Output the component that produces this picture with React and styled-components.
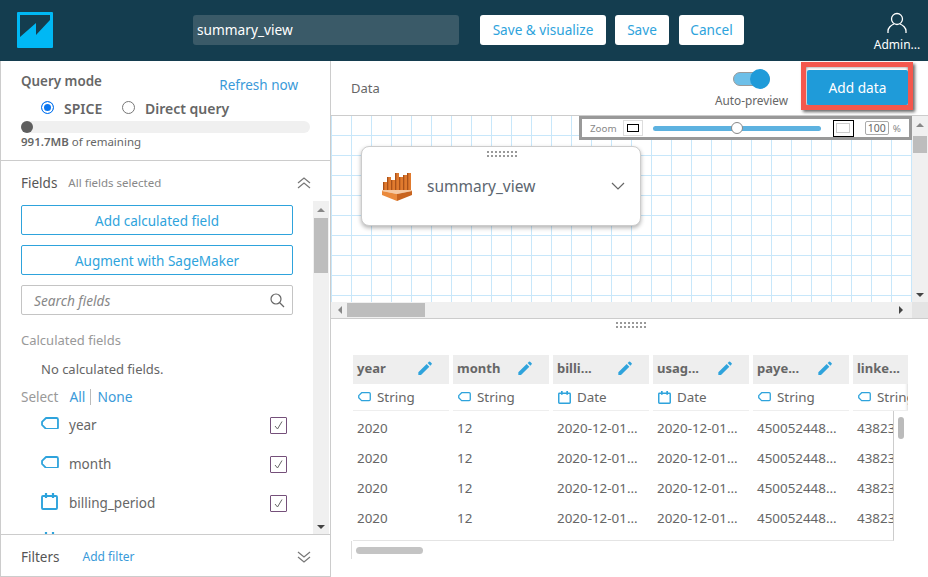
import React from 'react'
import styled, { createGlobalStyle } from 'styled-components'

const columns = [
  { name: 'year', type: 'String', kind: 'tag', value: '2020' },
  { name: 'month', type: 'String', kind: 'tag', value: '12' },
  { name: 'billi...', type: 'Date', kind: 'date', value: '2020-12-01...' },
  { name: 'usag...', type: 'Date', kind: 'date', value: '2020-12-01...' },
  { name: 'paye...', type: 'String', kind: 'tag', value: '450052448...' },
  { name: 'linke...', type: 'String', kind: 'tag', value: '438230000000', noEdit: true },
]

const fields = [
  { name: 'year', kind: 'tag' },
  { name: 'month', kind: 'tag' },
  { name: 'billing_period', kind: 'date' },
]

// x and top of each bar in the orange node icon
const nodeBars = [
  [0, 10],
  [4, 5],
  [8, 8],
  [12, 1],
  [16, 5],
  [20, 3],
  [24, 1],
]

const TagIcon = ({ size = 18 }) => (
  <svg width={size} height={size * 0.72} viewBox="0 0 18 13" fill="none" stroke="#2ea3dc" strokeWidth="1.800">
    <path d="M5 1h10.500a1.500 1.500 0 0 1 1.500 1.500v8a1.500 1.500 0 0 1-1.500 1.500H5L1 8V5z" strokeLinejoin="round" />
  </svg>
)

const DateIcon = ({ size = 17 }) => (
  <svg width={size} height={size} viewBox="0 0 17 17" fill="none" stroke="#2ea3dc" strokeWidth="1.900">
    <rect x="1" y="3" width="15" height="13" rx="1" />
    <path d="M5 0v5M12 0v5" strokeWidth="2.200" />
  </svg>
)

const FieldIcon = ({ kind, size }) =>
  kind === 'date' ? <DateIcon size={size} /> : <TagIcon size={size} />

const Pencil = () => (
  <svg width="16" height="16" viewBox="0 0 24 24" fill="#2ea3dc">
    <path d="M2 18.500V22.500h4L18.500 10l-4-4L2 18.500zM22 6.500a1.200 1.200 0 0 0 0-1.700L19.700 2.500a1.200 1.200 0 0 0-1.700 0L16 4.500l4 4 2-2z" />
  </svg>
)

const DoubleChevron = ({ up }) => (
  <svg width="14" height="12" viewBox="0 0 14 12" fill="none" stroke="#777" strokeWidth="1.200">
    {up ? <path d="M1 6l6-5 6 5M1 11l6-5 6 5" /> : <path d="M1 1l6 5 6-5M1 6l6 5 6-5" />}
  </svg>
)

const Logo = () => (
  <svg width="36" height="36" viewBox="0 0 36 36">
    <rect width="36" height="36" rx="1" fill="#00b8f5" />
    <path d="M3 3h30v5L19 23V11L3 25z" fill="#143d4f" />
  </svg>
)

const NodeIcon = () => (
  <svg width="30" height="29" viewBox="0 0 30 29">
    {nodeBars.map(([x, top]) => (
      <g key={x}>
        <rect x={x + 1} y={top} width="4" height={19 - top} fill="#e07a2e" />
        <rect x={x + 1} y={top} width="1.300" height={19 - top} fill="#a9511a" />
      </g>
    ))}
    <path d="M0 18h30v1l-15 3-15-3z" fill="#f6c9a2" />
    <path d="M0 19l15 3v7L0 23z" fill="#ea8a3c" />
    <path d="M15 22l15-3v4l-15 6z" fill="#c8641f" />
  </svg>
)

const User = () => (
  <svg width="20" height="22" viewBox="0 0 20 22" fill="none" stroke="#fff" strokeWidth="1.300">
    <circle cx="10" cy="7" r="5.500" />
    <path d="M1 21v-2c0-3 3-6 6-7M19 21v-2c0-3-3-6-6-7" />
  </svg>
)

const Search = () => (
  <svg width="15" height="15" viewBox="0 0 15 15" fill="none" stroke="#666" strokeWidth="1.200">
    <circle cx="6" cy="6" r="5" />
    <path d="M9.500 9.500L14 14" />
  </svg>
)

const App = () => (
  <Page>
    <GlobalStyle />
    <Header>
      <LogoSlot><Logo /></LogoSlot>
      <NameInput>summary_view</NameInput>
      <HeaderButton $ml={21} $w={126}>Save &amp; visualize</HeaderButton>
      <HeaderButton $ml={9} $w={54}>Save</HeaderButton>
      <HeaderButton $ml={10} $w={65}>Cancel</HeaderButton>
      <UserBlock>
        <User />
        <span>Admin...</span>
      </UserBlock>
    </Header>
    <Body>
      <Sidebar>
        <QuerySection>
          <QueryTop>
            <SectionLabel>Query mode</SectionLabel>
            <LinkText>Refresh now</LinkText>
          </QueryTop>
          <RadioRow>
            <Radio $on />
            <RadioLabel $w={58}>SPICE</RadioLabel>
            <Radio />
            <RadioLabel>Direct query</RadioLabel>
          </RadioRow>
          <Track><Knob /></Track>
          <Remaining><b>991.7MB</b> of remaining</Remaining>
        </QuerySection>
        <FieldsSection>
          <FieldsHead>
            <Title>Fields</Title>
            <Muted>All fields selected</Muted>
            <ChevronSlot><DoubleChevron up /></ChevronSlot>
          </FieldsHead>
          <FieldsScroll>
            <FieldsContent>
              <OutlineButton>Add calculated field</OutlineButton>
              <OutlineButton>Augment with SageMaker</OutlineButton>
              <SearchBox>
                <em>Search fields</em>
                <Search />
              </SearchBox>
              <GroupLabel>Calculated fields</GroupLabel>
              <EmptyNote>No calculated fields.</EmptyNote>
              <SelectRow>
                <GroupText>Select</GroupText>
                <SelectLink>All</SelectLink>
                <Divider />
                <SelectLink>None</SelectLink>
              </SelectRow>
              {fields.map((f) => (
                <FieldRow key={f.name}>
                  <FieldIconSlot><FieldIcon kind={f.kind} /></FieldIconSlot>
                  <FieldName>{f.name}</FieldName>
                  <Check>
                    <svg width="11" height="11" viewBox="0 0 11 11" fill="none" stroke="#666" strokeWidth="1">
                      <path d="M2 6l2.500 3L9 1.500" />
                    </svg>
                  </Check>
                </FieldRow>
              ))}
              <FieldRow>
                <FieldIconSlot><DateIcon /></FieldIconSlot>
              </FieldRow>
            </FieldsContent>
            <VBar $h={333}>
              <Arrow $dir="up" />
              <Thumb $h={55} $top={1} />
              <BarGap />
              <Arrow $dir="down" />
            </VBar>
          </FieldsScroll>
        </FieldsSection>
        <FiltersSection>
          <Title>Filters</Title>
          <AddFilter>Add filter</AddFilter>
          <ChevronSlot><DoubleChevron /></ChevronSlot>
        </FiltersSection>
      </Sidebar>
      <Main>
        <Toolbar>
          <DataLabel>Data</DataLabel>
          <PreviewBlock>
            <Toggle><ToggleKnob /></Toggle>
            <PreviewLabel>Auto-preview</PreviewLabel>
          </PreviewBlock>
          <Highlight><AddData>Add data</AddData></Highlight>
        </Toolbar>
        <Canvas>
          <CanvasRow>
            <Grid>
              <NodeCard>
                <Grip />
                <NodeIcon />
                <NodeName>summary_view</NodeName>
                <svg width="14" height="8" viewBox="0 0 14 8" fill="none" stroke="#666" strokeWidth="1.200">
                  <path d="M1 1l6 6 6-6" />
                </svg>
              </NodeCard>
            </Grid>
            <VBar $h={186}>
              <Arrow $dir="up" />
              <Thumb $h={17} $top={4} />
              <BarGap />
              <Arrow $dir="down" />
            </VBar>
          </CanvasRow>
          <HBar>
            <Arrow $dir="left" />
            <HThumb />
            <BarGap />
            <Arrow $dir="right" />
            <Corner />
          </HBar>
          <ZoomBar>
            <ZoomLabel>Zoom</ZoomLabel>
            <ZoomBox $small />
            <Slider><SliderKnob /></Slider>
            <ZoomBox />
            <Percent>100</Percent>
            <ZoomLabel>%</ZoomLabel>
          </ZoomBar>
        </Canvas>
        <Divide />
        <TableArea>
          <HeadClip>
            {columns.map((c) => (
              <HeadColumn key={c.name}>
                <HeadCell>
                  <HeadName>{c.name}</HeadName>
                  {!c.noEdit && <Pencil />}
                </HeadCell>
                <TypeCell>
                  <FieldIcon kind={c.kind} size={13} />
                  <span>{c.type}</span>
                </TypeCell>
              </HeadColumn>
            ))}
          </HeadClip>
          <BodyWrap>
            <BodyClip>
              {columns.map((c) => (
                <BodyColumn key={c.name}>
                  {[0, 1, 2, 3].map((i) => (
                    <Cell key={i}>{c.value}</Cell>
                  ))}
                </BodyColumn>
              ))}
            </BodyClip>
            <RowThumb />
          </BodyWrap>
          <FootBar><FootThumb /></FootBar>
        </TableArea>
      </Main>
    </Body>
  </Page>
)

export default App

const GlobalStyle = createGlobalStyle`
  html, body { margin: 0; padding: 0; background: #fff; }
  * { box-sizing: border-box; }
`

const Page = styled.div`
  width: 928px;
  height: 577px;
  overflow: hidden;
  display: flex;
  flex-direction: column;
  font-family: 'Noto Sans', 'Open Sans', sans-serif;
  color: #666;
  font-size: 13px;
`

const Header = styled.header`
  height: 61px;
  flex: none;
  background: #143d4f;
  display: flex;
  align-items: flex-start;
  padding-top: 15px;
`

const LogoSlot = styled.div`
  width: 193px;
  flex: none;
  padding: 0 0 0 17px;
  margin-top: -3px;
`

const NameInput = styled.div`
  width: 266px;
  height: 30px;
  background: #3a5a68;
  border-radius: 3px;
  color: #fff;
  font-size: 13.700px;
  line-height: 30px;
  padding-left: 4px;
`

const HeaderButton = styled.div`
  margin-left: ${(p) => p.$ml}px;
  width: ${(p) => p.$w}px;
  height: 30px;
  background: #fff;
  border-radius: 3px;
  color: #2ea3dc;
  font-size: 13.600px;
  line-height: 30px;
  text-align: center;
`

const UserBlock = styled.div`
  margin-left: auto;
  margin-top: -3px;
  margin-right: 3px;
  width: 56px;
  display: flex;
  flex-direction: column;
  align-items: center;
  color: #fff;
  font-size: 12px;
  line-height: 16px;
  gap: 3px;
`

const Body = styled.div`
  flex: 1;
  display: flex;
  min-height: 0;
`

const Sidebar = styled.aside`
  width: 331px;
  flex: none;
  display: flex;
  flex-direction: column;
  border-left: 1px solid #ccc;
  border-right: 1px solid #ccc;
  border-bottom: 1px solid #ccc;
`

const QuerySection = styled.section`
  height: 100px;
  flex: none;
  padding: 11px 20px 0;
  border-bottom: 1px solid #ccc;
`

const QueryTop = styled.div`
  display: flex;
  justify-content: space-between;
  align-items: flex-start;
  padding-right: 12px;
  height: 26px;
`

const SectionLabel = styled.div`
  font-weight: 600;
  font-size: 13.400px;
  line-height: 18px;
`

const LinkText = styled.div`
  color: #3a9ad9;
  font-size: 13.500px;
  line-height: 18px;
  margin-top: 4px;
`

const RadioRow = styled.div`
  display: flex;
  align-items: center;
  height: 20px;
  padding-left: 20px;
`

const Radio = styled.span`
  width: 13px;
  height: 13px;
  border-radius: 50%;
  flex: none;
  border: 1px solid ${(p) => (p.$on ? '#0a76f0' : '#777')};
  background: ${(p) => (p.$on ? '#0a76f0' : '#fff')};
  box-shadow: ${(p) => (p.$on ? 'inset 0 0 0 2px #fff' : 'none')};
  margin: -2px 10px 0 0;
`

const RadioLabel = styled.span`
  font-weight: 600;
  font-size: 14px;
  ${(p) => (p.$w ? `width: ${p.$w}px;` : '')}
`

const Track = styled.div`
  height: 12px;
  width: 289px;
  margin-top: 3px;
  border-radius: 6px;
  background: #f0f0f0;
`

const Knob = styled.div`
  width: 12px;
  height: 12px;
  border-radius: 50%;
  background: #5f5f5f;
`

const Remaining = styled.div`
  font-size: 11.500px;
  line-height: 16px;
  margin-top: 1px;
  b { font-weight: 600; }
`

const FieldsSection = styled.section`
  flex: 1;
  min-height: 0;
  display: flex;
  flex-direction: column;
  border-bottom: 1px solid #ccc;
`

const FieldsHead = styled.div`
  height: 40px;
  flex: none;
  display: flex;
  align-items: center;
  padding: 3px 19px 0 20px;
`

const Title = styled.span`
  font-size: 13.500px;
  color: #555;
`

const Muted = styled.span`
  font-size: 11.500px;
  color: #888;
  margin-left: 11px;
`

const ChevronSlot = styled.span`
  margin-left: auto;
  display: flex;
`

const FieldsScroll = styled.div`
  flex: 1;
  min-height: 0;
  display: flex;
  overflow: hidden;
`

const FieldsContent = styled.div`
  width: 312px;
  flex: none;
  padding: 4px 20px 0 20px;
  overflow: hidden;
`

const OutlineButton = styled.div`
  height: 30px;
  margin-bottom: 10px;
  border: 1px solid #2ea3dc;
  border-radius: 2px;
  color: #2ea3dc;
  font-size: 13.500px;
  line-height: 30px;
  text-align: center;
`

const SearchBox = styled.div`
  height: 30px;
  border: 1px solid #c4c4c4;
  border-radius: 2px;
  display: flex;
  align-items: center;
  justify-content: space-between;
  padding: 0 7px 0 12px;
  font-size: 13.700px;
  color: #888;
`

const GroupLabel = styled.div`
  margin-top: 15px;
  font-size: 13px;
  line-height: 20px;
  color: #999;
`

const EmptyNote = styled.div`
  margin-top: 9px;
  padding-left: 20px;
  font-size: 13px;
  line-height: 20px;
`

const SelectRow = styled.div`
  margin-top: 10px;
  display: flex;
  align-items: center;
  height: 16px;
  line-height: 20px;
`

const GroupText = styled.span`
  font-size: 13.500px;
  color: #999;
  margin-right: 11px;
`

const SelectLink = styled.span`
  color: #3a9ad9;
  font-size: 13.800px;
`

const Divider = styled.span`
  width: 1px;
  height: 16px;
  background: #bbb;
  margin: 0 6px 0 5px;
`

const FieldRow = styled.div`
  height: 39px;
  display: flex;
  align-items: center;
  padding: 0 6px 0 20px;
`

const FieldIconSlot = styled.span`
  width: 28px;
  flex: none;
  display: flex;
  margin-top: -3px;
`

const FieldName = styled.span`
  font-size: 13.500px;
  flex: 1;
`

const Check = styled.span`
  width: 17px;
  height: 17px;
  border: 1px solid #75507a;
  border-radius: 1px;
  display: flex;
  align-items: center;
  justify-content: center;
  margin-top: 2px;
`

const FiltersSection = styled.section`
  flex: 1 0 41px;
  max-height: 41px;
  display: flex;
  align-items: center;
  padding: 2px 19px 0 20px;
`

const AddFilter = styled.span`
  margin-left: 23px;
  font-size: 12px;
  color: #3a9ad9;
`

const VBar = styled.div`
  width: 16px;
  height: ${(p) => p.$h}px;
  flex: none;
  background: #f0f0f0;
  display: flex;
  flex-direction: column;
  align-items: center;
`

const BarGap = styled.div`
  flex: 1;
`

const Thumb = styled.div`
  width: 14px;
  height: ${(p) => p.$h}px;
  background: #bdbdbd;
  margin-top: ${(p) => p.$top || 0}px;
`

const arrowShapes = {
  up: 'border-left: 4px solid transparent; border-right: 4px solid transparent; border-bottom: 4px solid #888; margin: 7px 0 5px;',
  down: 'border-left: 4px solid transparent; border-right: 4px solid transparent; border-top: 4px solid #444; margin: 7px 0 5px;',
  left: 'border-top: 4px solid transparent; border-bottom: 4px solid transparent; border-right: 4px solid #888; margin: 0 5px 0 7px;',
  right: 'border-top: 4px solid transparent; border-bottom: 4px solid transparent; border-left: 4px solid #444; margin: 0 9px 0 5px;',
}

const Arrow = styled.span`
  width: 0;
  height: 0;
  flex: none;
  ${(p) => arrowShapes[p.$dir]}
`

const Main = styled.main`
  flex: 1;
  min-width: 0;
  display: flex;
  flex-direction: column;
`

const Toolbar = styled.div`
  height: 54px;
  flex: none;
  display: flex;
  align-items: center;
  padding: 0 15px 0 20px;
`

const DataLabel = styled.span`
  font-size: 13px;
  flex: 1;
`

const PreviewBlock = styled.div`
  display: flex;
  flex-direction: column;
  align-items: center;
  margin-right: 13px;
  margin-top: 3px;
`

const Toggle = styled.div`
  width: 37px;
  height: 14px;
  border-radius: 8px;
  background: #6dbfe8;
  border: 1px solid #999;
  position: relative;
  margin: 1px 0 6px;
`

const ToggleKnob = styled.div`
  position: absolute;
  right: -1px;
  top: -4px;
  width: 20px;
  height: 20px;
  border-radius: 50%;
  background: #1f9bd9;
`

const PreviewLabel = styled.span`
  font-size: 11.800px;
  line-height: 16px;
`

const Highlight = styled.div`
  width: 112px;
  height: 48px;
  border: 5px solid #f4574d;
  padding: 3px 0 0 1px;
  box-shadow: 2px 2px 3px rgba(0, 0, 0, 0.6), inset 0 0 3px rgba(0, 0, 0, 0.5);
  margin-top: -4px;
  background: #fff;
`

const AddData = styled.div`
  height: 100%;
  background: #1f9bd9;
  border-radius: 2px;
  color: #fff;
  font-size: 13.700px;
  line-height: 35px;
  text-align: center;
`

const Canvas = styled.div`
  height: 203px;
  flex: none;
  position: relative;
  display: flex;
  flex-direction: column;
  border-top: 1px solid #ccc;
`

const CanvasRow = styled.div`
  flex: 1;
  min-height: 0;
  display: flex;
`

const Grid = styled.div`
  flex: 1;
  position: relative;
  background-color: #fff;
  background-image: linear-gradient(#c8e7fa 1px, transparent 1px), linear-gradient(90deg, #c8e7fa 1px, transparent 1px);
  background-size: 20px 20px;
  background-position: 0 19px;
`

const NodeCard = styled.div`
  position: absolute;
  left: 30px;
  top: 30px;
  width: 280px;
  height: 80px;
  background: #fff;
  border: 1px solid #ccc;
  border-radius: 8px;
  box-shadow: 0 2px 4px rgba(0, 0, 0, 0.3);
  display: flex;
  align-items: center;
  padding: 0 15px 0 20px;
`

const Grip = styled.div`
  position: absolute;
  left: 124px;
  top: 3px;
  width: 32px;
  height: 8px;
  background-image: radial-gradient(#999 1.200px, transparent 1.200px);
  background-size: 4px 4px;
`

const NodeName = styled.span`
  flex: 1;
  margin-left: 15px;
  font-size: 15.500px;
  color: #5c6670;
`

const HBar = styled.div`
  height: 16px;
  flex: none;
  background: #f0f0f0;
  display: flex;
  align-items: center;
`

const HThumb = styled.div`
  width: 78px;
  height: 14px;
  background: #bdbdbd;
`

const Corner = styled.div`
  width: 16px;
  height: 16px;
  background: #e4e4e4;
`

const ZoomBar = styled.div`
  position: absolute;
  right: 16px;
  top: 0;
  width: 333px;
  height: 24px;
  background: #fff;
  border: 3px solid #999;
  display: flex;
  align-items: center;
  padding: 0 8px;
`

const ZoomLabel = styled.span`
  font-size: 9.800px;
  color: #888;
`

const ZoomBox = styled.span`
  width: ${(p) => (p.$small ? 20 : 21)}px;
  height: ${(p) => (p.$small ? 16 : 17)}px;
  margin-left: ${(p) => (p.$small ? 6 : 12)}px;
  border: ${(p) => (p.$small ? '1px solid #ddd' : '1px solid #000')};
  flex: none;
  display: flex;
  align-items: center;
  justify-content: center;
  &::after {
    content: '';
    width: ${(p) => (p.$small ? 10 : 12)}px;
    height: ${(p) => (p.$small ? 6 : 8)}px;
    border: 1px solid ${(p) => (p.$small ? '#000' : '#ccc')};
  }
`

const Slider = styled.span`
  width: 168px;
  height: 5px;
  margin-left: 10px;
  background: #5db2e0;
  border-radius: 3px;
  position: relative;
  flex: none;
`

const SliderKnob = styled.span`
  position: absolute;
  left: 78px;
  top: -3.500px;
  width: 12px;
  height: 12px;
  border-radius: 50%;
  background: #fff;
  border: 1px solid #888;
`

const Percent = styled.span`
  width: 25px;
  height: 14px;
  margin: 0 4px 0 11px;
  border: 1px solid #aaa;
  border-radius: 2px;
  font-size: 10.500px;
  line-height: 12px;
  text-align: center;
`

const Divide = styled.div`
  height: 1px;
  background: #ccc;
  flex: none;
  position: relative;
  &::after {
    content: '';
    position: absolute;
    left: 284px;
    top: 3px;
    width: 32px;
    height: 8px;
    background-image: radial-gradient(#999 1.200px, transparent 1.200px);
    background-size: 4px 4px;
  }
`

const TableArea = styled.div`
  flex: 1;
  min-height: 0;
  padding: 36px 0 0 22px;
`

const HeadClip = styled.div`
  display: flex;
  gap: 4px;
  width: 555px;
  overflow: hidden;
  box-shadow: inset -3px 0 3px -2px rgba(0, 0, 0, 0.15);
`

const HeadColumn = styled.div`
  width: 96px;
  flex: none;
`

const HeadCell = styled.div`
  height: 29px;
  background: #eee;
  display: flex;
  align-items: center;
  justify-content: space-between;
  padding: 0 16px 3px 4px;
`

const HeadName = styled.span`
  font-weight: 700;
  font-size: 13px;
`

const TypeCell = styled.div`
  height: 27px;
  border-bottom: 1px solid #eee;
  display: flex;
  align-items: center;
  gap: 6px;
  padding-left: 5px;
  font-size: 13.400px;
`

const BodyWrap = styled.div`
  display: flex;
  align-items: flex-start;
  gap: 4px;
`

const BodyClip = styled.div`
  display: flex;
  gap: 4px;
  width: 541px;
  height: 130px;
  overflow: hidden;
  padding-top: 2px;
  border-right: 1px solid #ccc;
  border-bottom: 1px solid #e4e4e4;
`

const BodyColumn = styled.div`
  width: 96px;
  flex: none;
`

const Cell = styled.div`
  height: 30px;
  padding-left: 4px;
  font-size: 13.400px;
  line-height: 30px;
  white-space: nowrap;
`

const RowThumb = styled.span`
  width: 6px;
  height: 22px;
  margin-top: 6px;
  border-radius: 3px;
  background: #bbb;
`

const FootBar = styled.div`
  height: 18px;
  width: 542px;
  margin-left: -2px;
  border-left: 1px solid #ddd;
  display: flex;
  align-items: center;
  padding-left: 4px;
`

const FootThumb = styled.div`
  width: 67px;
  height: 7px;
  border-radius: 4px;
  background: #c4c4c4;
`
